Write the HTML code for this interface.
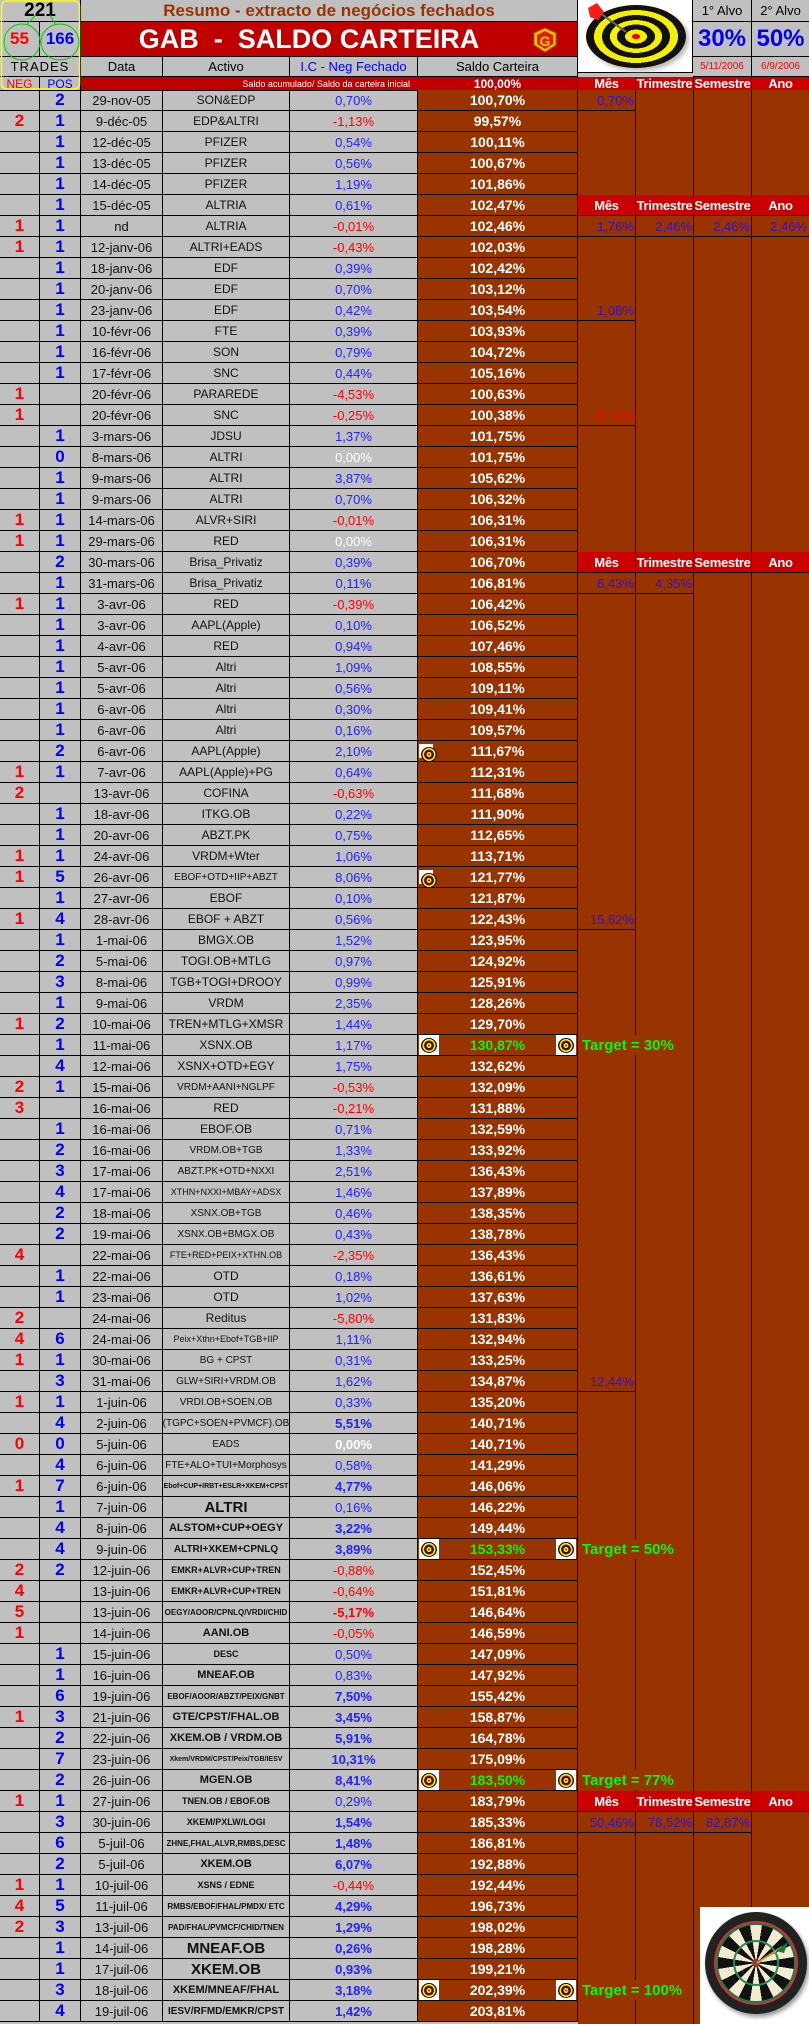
<!DOCTYPE html>
<html><head><meta charset="utf-8">
<style>
*{margin:0;padding:0;box-sizing:border-box}
body{width:809px;height:2024px;background:#c0c0c0;font-family:"Liberation Sans",Arial,sans-serif;position:relative;overflow:hidden}
.abs{position:absolute}
.r{display:flex;height:21px;border-bottom:1px solid #000;width:578px}
.r>div{border-right:1px solid #000;display:flex;align-items:center;justify-content:center;white-space:nowrap;overflow:hidden;height:20px}
.r>div:nth-child(1){width:40px;color:#f00;font-weight:bold;font-size:17px}
.r>div:nth-child(2){width:41px;color:#00f;font-weight:bold;font-size:17px}
.r>div:nth-child(3){width:82px;font-size:13px;color:#111}
.r>div:nth-child(4){width:127px;font-size:12px;color:#111}
.r>div:nth-child(5){width:128px;font-size:13px;color:#22f}
.r>div:nth-child(6){width:160px;background:#993300;color:#fff;font-weight:bold;font-size:14px;position:relative}
.r>div.ng{color:#f00!important}
.r>div.w{color:#fff!important}
.bo{font-weight:bold}
.s1{font-size:10px!important}
.s2{font-size:9px!important;font-weight:bold}
.s3{font-size:7px!important;font-weight:bold}
.s4{font-size:11px!important;font-weight:bold}
.s5{font-size:15px!important;font-weight:bold}
.g{color:#0f0!important}
.ic{position:absolute;top:0;width:20px;height:20px;background:#fff}
.ic::after{content:"";position:absolute;left:2px;top:3px;width:16px;height:15px;border-radius:50%;background:repeating-radial-gradient(circle,#c00 0 1px,#ee0 1px 2.5px,#111 2.5px 4px)}
.hd{position:absolute;display:flex;align-items:center;justify-content:center;white-space:nowrap}
.rh{position:absolute;left:0;width:231px;height:21px;background:#cc0000;border-bottom:1px solid #000;display:flex}
.rh div{height:20px;display:flex;align-items:center;justify-content:center;color:#fff;font-weight:bold;font-size:13px;border-right:1px solid #000;letter-spacing:-0.3px}
.rv{position:absolute;height:21px;display:flex;align-items:center;justify-content:flex-end;padding-right:2px;color:#3311cc;font-size:13px}
.bl{border-bottom:1px solid #000}
.vl{position:absolute;width:1px;background:#000;top:0;bottom:0}
.tg{position:absolute;left:2px;height:20px;padding:0 2px;background:#993300;color:#0f0;font-weight:bold;font-size:15px;display:flex;align-items:center;white-space:nowrap}
</style></head><body>

<div class="abs" style="left:0;top:0;width:809px;height:90px;background:#c0c0c0"></div>
<div class="hd" style="left:0;top:0;width:81px;height:22px;font-size:19px;font-weight:bold;border-right:1px solid #000;border-bottom:1px solid #000">221</div>
<div class="hd" style="left:81px;top:0;width:497px;height:22px;font-size:17px;font-weight:bold;color:#993300;border-right:1px solid #000;border-bottom:1px solid #000">Resumo - extracto de negócios fechados</div>
<div class="hd" style="left:0;top:22px;width:40px;height:35px;font-size:17px;font-weight:bold;color:#f00;border-right:1px solid #000;border-bottom:1px solid #000">55</div>
<div class="hd" style="left:40px;top:22px;width:41px;height:35px;font-size:17px;font-weight:bold;color:#00f;border-right:1px solid #000;border-bottom:1px solid #000">166</div>
<div class="hd" style="left:81px;top:22px;width:497px;height:35px;background:#c00000;color:#fff;font-size:27px;font-weight:bold;border-right:1px solid #000;border-bottom:1px solid #000;padding-right:40px">GAB&nbsp; -&nbsp; SALDO CARTEIRA</div>
<svg class="abs" style="left:532px;top:27px" width="26" height="26" viewBox="0 0 26 26"><path d="M13 1 L24 6 L24 18 L13 25 L2 18 L2 6 Z" fill="#f5c000" stroke="#a06000"/><path d="M13 4 L21 8 L21 17 L13 22 L5 17 L5 8 Z" fill="#e02000"/><text x="13" y="19" font-family="Liberation Sans" font-weight="bold" font-size="14" fill="#ffd000" text-anchor="middle">G</text></svg>
<div class="hd" style="left:0;top:57px;width:81px;height:20px;font-size:13px;letter-spacing:1px;border-right:1px solid #000;border-bottom:1px solid #000">TRADES</div>
<div class="hd" style="left:81px;top:57px;width:82px;height:20px;font-size:13px;border-right:1px solid #000;border-bottom:1px solid #000">Data</div>
<div class="hd" style="left:163px;top:57px;width:127px;height:20px;font-size:13px;border-right:1px solid #000;border-bottom:1px solid #000">Activo</div>
<div class="hd" style="left:290px;top:57px;width:128px;height:20px;font-size:13px;color:#00f;border-right:1px solid #000;border-bottom:1px solid #000">I.C - Neg Fechado</div>
<div class="hd" style="left:418px;top:57px;width:160px;height:20px;font-size:13px;border-right:1px solid #000;border-bottom:1px solid #000">Saldo Carteira</div>
<div class="hd" style="left:0;top:77px;width:40px;height:14px;font-size:12px;color:#f00;border-right:1px solid #000;border-bottom:1px solid #000">NEG</div>
<div class="hd" style="left:40px;top:77px;width:41px;height:14px;font-size:12px;color:#00f;border-right:1px solid #000;border-bottom:1px solid #000">POS</div>
<div class="hd" style="left:81px;top:77px;width:337px;height:14px;background:#c00000;color:#fff;font-size:9px;justify-content:flex-end;padding-right:8px;border-bottom:1px solid #000">Saldo acumulado/ Saldo da carteira inicial</div>
<div class="hd" style="left:418px;top:77px;width:160px;height:14px;background:#c00000;color:#fff;font-size:12px;font-weight:bold;border-right:1px solid #000;border-bottom:1px solid #000">100,00%</div>
<div class="rh" style="left:578px;top:77px;height:14px"><div style="width:58px;height:13px">Mês</div><div style="width:58px;height:13px">Trimestre</div><div style="width:58px;height:13px">Semestre</div><div style="width:57px;height:13px;border-right:0">Ano</div></div>
<div class="abs" style="left:578px;top:0;width:115px;height:73px;background:#fff;border-right:1px solid #000;border-bottom:1px solid #000"></div>
<div class="abs" style="left:586px;top:5px;width:100px;height:63px;border-radius:50%;background:#ff0;box-shadow:3px 3px 4px #bbb"></div>
<div class="abs" style="left:586px;top:5px;width:100px;height:63px;border-radius:50%;background:repeating-radial-gradient(ellipse closest-side,#e00 0 8%,#f4f000 8% 22%,#111 22% 38%,#f4f000 38% 52%,#111 52% 68%,#f4f000 68% 84%,#111 84% 100%)"></div>
<svg class="abs" style="left:578px;top:0" width="115" height="72"><line x1="22" y1="13" x2="48" y2="32" stroke="#666" stroke-width="2"/><path d="M10 8 L19 3 L26 12 L20 20 L12 17 Z" fill="#ff1a1a"/></svg>
<div class="hd" style="left:693px;top:0;width:59px;height:22px;font-size:13px;border-right:1px solid #000;border-bottom:1px solid #000">1° Alvo</div>
<div class="hd" style="left:752px;top:0;width:57px;height:22px;font-size:13px;border-bottom:1px solid #000">2° Alvo</div>
<div class="hd" style="left:693px;top:22px;width:59px;height:35px;font-size:24px;font-weight:bold;color:#00f;border-right:1px solid #000;border-bottom:1px solid #000">30%</div>
<div class="hd" style="left:752px;top:22px;width:57px;height:35px;font-size:24px;font-weight:bold;color:#00f;border-bottom:1px solid #000">50%</div>
<div class="hd" style="left:693px;top:57px;width:59px;height:20px;font-size:10px;color:#f00;border-right:1px solid #000;border-bottom:1px solid #000">5/11/2006</div>
<div class="hd" style="left:752px;top:57px;width:57px;height:20px;font-size:10px;color:#f00;border-bottom:1px solid #000">6/9/2006</div>
<svg class="abs" style="left:0;top:0" width="82" height="90"><rect x="1.5" y="1" width="78" height="88" rx="5" fill="none" stroke="#ff0" stroke-width="1.5"/><ellipse cx="22" cy="42" rx="18" ry="18" fill="none" stroke="#0c0"/><ellipse cx="60" cy="42" rx="19" ry="18" fill="none" stroke="#0c0"/><line x1="27" y1="24" x2="36" y2="15" stroke="#0c0"/><line x1="55" y1="24" x2="50" y2="15" stroke="#0c0"/></svg>

<div class="abs" style="left:0;top:90px">
<div class="r"><div></div><div>2</div><div>29-nov-05</div><div>SON&amp;EDP</div><div>0,70%</div><div>100,70%</div></div>
<div class="r"><div>2</div><div>1</div><div>9-déc-05</div><div>EDP&amp;ALTRI</div><div class="ng">-1,13%</div><div>99,57%</div></div>
<div class="r"><div></div><div>1</div><div>12-déc-05</div><div>PFIZER</div><div>0,54%</div><div>100,11%</div></div>
<div class="r"><div></div><div>1</div><div>13-déc-05</div><div>PFIZER</div><div>0,56%</div><div>100,67%</div></div>
<div class="r"><div></div><div>1</div><div>14-déc-05</div><div>PFIZER</div><div>1,19%</div><div>101,86%</div></div>
<div class="r"><div></div><div>1</div><div>15-déc-05</div><div>ALTRIA</div><div>0,61%</div><div>102,47%</div></div>
<div class="r"><div>1</div><div>1</div><div>nd</div><div>ALTRIA</div><div class="ng">-0,01%</div><div>102,46%</div></div>
<div class="r"><div>1</div><div>1</div><div>12-janv-06</div><div>ALTRI+EADS</div><div class="ng">-0,43%</div><div>102,03%</div></div>
<div class="r"><div></div><div>1</div><div>18-janv-06</div><div>EDF</div><div>0,39%</div><div>102,42%</div></div>
<div class="r"><div></div><div>1</div><div>20-janv-06</div><div>EDF</div><div>0,70%</div><div>103,12%</div></div>
<div class="r"><div></div><div>1</div><div>23-janv-06</div><div>EDF</div><div>0,42%</div><div>103,54%</div></div>
<div class="r"><div></div><div>1</div><div>10-févr-06</div><div>FTE</div><div>0,39%</div><div>103,93%</div></div>
<div class="r"><div></div><div>1</div><div>16-févr-06</div><div>SON</div><div>0,79%</div><div>104,72%</div></div>
<div class="r"><div></div><div>1</div><div>17-févr-06</div><div>SNC</div><div>0,44%</div><div>105,16%</div></div>
<div class="r"><div>1</div><div></div><div>20-févr-06</div><div>PARAREDE</div><div class="ng">-4,53%</div><div>100,63%</div></div>
<div class="r"><div>1</div><div></div><div>20-févr-06</div><div>SNC</div><div class="ng">-0,25%</div><div>100,38%</div></div>
<div class="r"><div></div><div>1</div><div>3-mars-06</div><div>JDSU</div><div>1,37%</div><div>101,75%</div></div>
<div class="r"><div></div><div>0</div><div>8-mars-06</div><div>ALTRI</div><div class="w">0,00%</div><div>101,75%</div></div>
<div class="r"><div></div><div>1</div><div>9-mars-06</div><div>ALTRI</div><div>3,87%</div><div>105,62%</div></div>
<div class="r"><div></div><div>1</div><div>9-mars-06</div><div>ALTRI</div><div>0,70%</div><div>106,32%</div></div>
<div class="r"><div>1</div><div>1</div><div>14-mars-06</div><div>ALVR+SIRI</div><div class="ng">-0,01%</div><div>106,31%</div></div>
<div class="r"><div>1</div><div>1</div><div>29-mars-06</div><div>RED</div><div class="w">0,00%</div><div>106,31%</div></div>
<div class="r"><div></div><div>2</div><div>30-mars-06</div><div>Brisa_Privatiz</div><div>0,39%</div><div>106,70%</div></div>
<div class="r"><div></div><div>1</div><div>31-mars-06</div><div>Brisa_Privatiz</div><div>0,11%</div><div>106,81%</div></div>
<div class="r"><div>1</div><div>1</div><div>3-avr-06</div><div>RED</div><div class="ng">-0,39%</div><div>106,42%</div></div>
<div class="r"><div></div><div>1</div><div>3-avr-06</div><div>AAPL(Apple)</div><div>0,10%</div><div>106,52%</div></div>
<div class="r"><div></div><div>1</div><div>4-avr-06</div><div>RED</div><div>0,94%</div><div>107,46%</div></div>
<div class="r"><div></div><div>1</div><div>5-avr-06</div><div>Altri</div><div>1,09%</div><div>108,55%</div></div>
<div class="r"><div></div><div>1</div><div>5-avr-06</div><div>Altri</div><div>0,56%</div><div>109,11%</div></div>
<div class="r"><div></div><div>1</div><div>6-avr-06</div><div>Altri</div><div>0,30%</div><div>109,41%</div></div>
<div class="r"><div></div><div>1</div><div>6-avr-06</div><div>Altri</div><div>0,16%</div><div>109,57%</div></div>
<div class="r"><div></div><div>2</div><div>6-avr-06</div><div>AAPL(Apple)</div><div>2,10%</div><div><span class="ic" style="left:1px;width:14px;height:14px;top:3px"></span>111,67%</div></div>
<div class="r"><div>1</div><div>1</div><div>7-avr-06</div><div>AAPL(Apple)+PG</div><div>0,64%</div><div>112,31%</div></div>
<div class="r"><div>2</div><div></div><div>13-avr-06</div><div>COFINA</div><div class="ng">-0,63%</div><div>111,68%</div></div>
<div class="r"><div></div><div>1</div><div>18-avr-06</div><div>ITKG.OB</div><div>0,22%</div><div>111,90%</div></div>
<div class="r"><div></div><div>1</div><div>20-avr-06</div><div>ABZT.PK</div><div>0,75%</div><div>112,65%</div></div>
<div class="r"><div>1</div><div>1</div><div>24-avr-06</div><div>VRDM+Wter</div><div>1,06%</div><div>113,71%</div></div>
<div class="r"><div>1</div><div>5</div><div>26-avr-06</div><div class="s1">EBOF+OTD+IIP+ABZT</div><div>8,06%</div><div><span class="ic" style="left:1px;width:14px;height:14px;top:3px"></span>121,77%</div></div>
<div class="r"><div></div><div>1</div><div>27-avr-06</div><div>EBOF</div><div>0,10%</div><div>121,87%</div></div>
<div class="r"><div>1</div><div>4</div><div>28-avr-06</div><div>EBOF + ABZT</div><div>0,56%</div><div>122,43%</div></div>
<div class="r"><div></div><div>1</div><div>1-mai-06</div><div>BMGX.OB</div><div>1,52%</div><div>123,95%</div></div>
<div class="r"><div></div><div>2</div><div>5-mai-06</div><div>TOGI.OB+MTLG</div><div>0,97%</div><div>124,92%</div></div>
<div class="r"><div></div><div>3</div><div>8-mai-06</div><div>TGB+TOGI+DROOY</div><div>0,99%</div><div>125,91%</div></div>
<div class="r"><div></div><div>1</div><div>9-mai-06</div><div>VRDM</div><div>2,35%</div><div>128,26%</div></div>
<div class="r"><div>1</div><div>2</div><div>10-mai-06</div><div>TREN+MTLG+XMSR</div><div>1,44%</div><div>129,70%</div></div>
<div class="r"><div></div><div>1</div><div>11-mai-06</div><div>XSNX.OB</div><div>1,17%</div><div class="g"><span class="ic" style="left:1px"></span>130,87%<span class="ic" style="left:138px"></span></div></div>
<div class="r"><div></div><div>4</div><div>12-mai-06</div><div>XSNX+OTD+EGY</div><div>1,75%</div><div>132,62%</div></div>
<div class="r"><div>2</div><div>1</div><div>15-mai-06</div><div class="s1">VRDM+AANI+NGLPF</div><div class="ng">-0,53%</div><div>132,09%</div></div>
<div class="r"><div>3</div><div></div><div>16-mai-06</div><div>RED</div><div class="ng">-0,21%</div><div>131,88%</div></div>
<div class="r"><div></div><div>1</div><div>16-mai-06</div><div>EBOF.OB</div><div>0,71%</div><div>132,59%</div></div>
<div class="r"><div></div><div>2</div><div>16-mai-06</div><div class="s1">VRDM.OB+TGB</div><div>1,33%</div><div>133,92%</div></div>
<div class="r"><div></div><div>3</div><div>17-mai-06</div><div class="s1">ABZT.PK+OTD+NXXI</div><div>2,51%</div><div>136,43%</div></div>
<div class="r"><div></div><div>4</div><div>17-mai-06</div><div class="s2" style="font-weight:normal">XTHN+NXXI+MBAY+ADSX</div><div>1,46%</div><div>137,89%</div></div>
<div class="r"><div></div><div>2</div><div>18-mai-06</div><div class="s1">XSNX.OB+TGB</div><div>0,46%</div><div>138,35%</div></div>
<div class="r"><div></div><div>2</div><div>19-mai-06</div><div class="s1">XSNX.OB+BMGX.OB</div><div>0,43%</div><div>138,78%</div></div>
<div class="r"><div>4</div><div></div><div>22-mai-06</div><div class="s2" style="font-weight:normal">FTE+RED+PEIX+XTHN.OB</div><div class="ng">-2,35%</div><div>136,43%</div></div>
<div class="r"><div></div><div>1</div><div>22-mai-06</div><div>OTD</div><div>0,18%</div><div>136,61%</div></div>
<div class="r"><div></div><div>1</div><div>23-mai-06</div><div>OTD</div><div>1,02%</div><div>137,63%</div></div>
<div class="r"><div>2</div><div></div><div>24-mai-06</div><div>Reditus</div><div class="ng">-5,80%</div><div>131,83%</div></div>
<div class="r"><div>4</div><div>6</div><div>24-mai-06</div><div class="s2" style="font-weight:normal">Peix+Xthn+Ebof+TGB+IIP</div><div>1,11%</div><div>132,94%</div></div>
<div class="r"><div>1</div><div>1</div><div>30-mai-06</div><div class="s1">BG + CPST</div><div>0,31%</div><div>133,25%</div></div>
<div class="r"><div></div><div>3</div><div>31-mai-06</div><div class="s1">GLW+SIRI+VRDM.OB</div><div>1,62%</div><div>134,87%</div></div>
<div class="r"><div>1</div><div>1</div><div>1-juin-06</div><div class="s1">VRDI.OB+SOEN.OB</div><div>0,33%</div><div>135,20%</div></div>
<div class="r"><div></div><div>4</div><div>2-juin-06</div><div style="font-size:10px">(TGPC+SOEN+PVMCF).OB</div><div class="bo">5,51%</div><div>140,71%</div></div>
<div class="r"><div>0</div><div>0</div><div>5-juin-06</div><div class="s1">EADS</div><div class="w bo">0,00%</div><div>140,71%</div></div>
<div class="r"><div></div><div>4</div><div>6-juin-06</div><div style="font-size:10px">FTE+ALO+TUI+Morphosys</div><div>0,58%</div><div>141,29%</div></div>
<div class="r"><div>1</div><div>7</div><div>6-juin-06</div><div class="s3">Ebof+CUP+IRBT+ESLR+XKEM+CPST</div><div class="bo">4,77%</div><div>146,06%</div></div>
<div class="r"><div></div><div>1</div><div>7-juin-06</div><div class="s5">ALTRI</div><div>0,16%</div><div>146,22%</div></div>
<div class="r"><div></div><div>4</div><div>8-juin-06</div><div class="s4">ALSTOM+CUP+OEGY</div><div class="bo">3,22%</div><div>149,44%</div></div>
<div class="r"><div></div><div>4</div><div>9-juin-06</div><div class="s4" style="font-size:10px!important">ALTRI+XKEM+CPNLQ</div><div class="bo">3,89%</div><div class="g"><span class="ic" style="left:1px"></span>153,33%<span class="ic" style="left:138px"></span></div></div>
<div class="r"><div>2</div><div>2</div><div>12-juin-06</div><div class="s2">EMKR+ALVR+CUP+TREN</div><div class="ng">-0,88%</div><div>152,45%</div></div>
<div class="r"><div>4</div><div></div><div>13-juin-06</div><div class="s2">EMKR+ALVR+CUP+TREN</div><div class="ng">-0,64%</div><div>151,81%</div></div>
<div class="r"><div>5</div><div></div><div>13-juin-06</div><div class="s3" style="font-size:8px!important">OEGY/AOOR/CPNLQ/VRDI/CHID</div><div class="ng bo">-5,17%</div><div>146,64%</div></div>
<div class="r"><div>1</div><div></div><div>14-juin-06</div><div class="s4">AANI.OB</div><div class="ng">-0,05%</div><div>146,59%</div></div>
<div class="r"><div></div><div>1</div><div>15-juin-06</div><div class="s2">DESC</div><div>0,50%</div><div>147,09%</div></div>
<div class="r"><div></div><div>1</div><div>16-juin-06</div><div class="s4">MNEAF.OB</div><div>0,83%</div><div>147,92%</div></div>
<div class="r"><div></div><div>6</div><div>19-juin-06</div><div class="s3" style="font-size:8px!important">EBOF/AOOR/ABZT/PEIX/GNBT</div><div class="bo">7,50%</div><div>155,42%</div></div>
<div class="r"><div>1</div><div>3</div><div>21-juin-06</div><div class="s4">GTE/CPST/FHAL.OB</div><div class="bo">3,45%</div><div>158,87%</div></div>
<div class="r"><div></div><div>2</div><div>22-juin-06</div><div class="s4">XKEM.OB / VRDM.OB</div><div class="bo">5,91%</div><div>164,78%</div></div>
<div class="r"><div></div><div>7</div><div>23-juin-06</div><div class="s3">Xkem/VRDM/CPST/Peix/TGB/IESV</div><div class="bo">10,31%</div><div>175,09%</div></div>
<div class="r"><div></div><div>2</div><div>26-juin-06</div><div class="s4">MGEN.OB</div><div class="bo">8,41%</div><div class="g"><span class="ic" style="left:1px"></span>183,50%<span class="ic" style="left:138px"></span></div></div>
<div class="r"><div>1</div><div>1</div><div>27-juin-06</div><div class="s2">TNEN.OB / EBOF.OB</div><div>0,29%</div><div>183,79%</div></div>
<div class="r"><div></div><div>3</div><div>30-juin-06</div><div class="s2">XKEM/PXLW/LOGI</div><div class="bo">1,54%</div><div>185,33%</div></div>
<div class="r"><div></div><div>6</div><div>5-juil-06</div><div class="s3" style="font-size:8px!important">ZHNE,FHAL,ALVR,RMBS,DESC</div><div class="bo">1,48%</div><div>186,81%</div></div>
<div class="r"><div></div><div>2</div><div>5-juil-06</div><div class="s4">XKEM.OB</div><div class="bo">6,07%</div><div>192,88%</div></div>
<div class="r"><div>1</div><div>1</div><div>10-juil-06</div><div class="s2">XSNS / EDNE</div><div class="ng">-0,44%</div><div>192,44%</div></div>
<div class="r"><div>4</div><div>5</div><div>11-juil-06</div><div class="s3" style="font-size:8px!important">RMBS/EBOF/FHAL/PMDX/ ETC</div><div class="bo">4,29%</div><div>196,73%</div></div>
<div class="r"><div>2</div><div>3</div><div>13-juil-06</div><div class="s3" style="font-size:8px!important">PAD/FHAL/PVMCF/CHID/TNEN</div><div class="bo">1,29%</div><div>198,02%</div></div>
<div class="r"><div></div><div>1</div><div>14-juil-06</div><div class="s5">MNEAF.OB</div><div class="bo">0,26%</div><div>198,28%</div></div>
<div class="r"><div></div><div>1</div><div>17-juil-06</div><div class="s5">XKEM.OB</div><div class="bo">0,93%</div><div>199,21%</div></div>
<div class="r"><div></div><div>3</div><div>18-juil-06</div><div class="s4">XKEM/MNEAF/FHAL</div><div class="bo">3,18%</div><div><span class="ic" style="left:1px"></span>202,39%<span class="ic" style="left:138px"></span></div></div>
<div class="r"><div></div><div>4</div><div>19-juil-06</div><div class="s4" style="font-size:10px!important">IESV/RFMD/EMKR/CPST</div><div class="bo">1,42%</div><div>203,81%</div></div>
</div>

<div class="abs" style="left:578px;top:90px;width:231px;height:1934px;background:#993300">
<div class="vl" style="left:57px"></div><div class="vl" style="left:115px"></div><div class="vl" style="left:173px"></div>
<div class="rv bl" style="left:0;top:0;width:58px">0,70%</div>
<div class="rh" style="top:105px"><div style="width:58px">Mês</div><div style="width:58px">Trimestre</div><div style="width:58px">Semestre</div><div style="width:57px;border-right:0">Ano</div></div>
<div class="rv bl" style="left:0;top:126px;width:58px">1,76%</div>
<div class="rv bl" style="left:58px;top:126px;width:58px">2,46%</div>
<div class="rv bl" style="left:116px;top:126px;width:58px">2,46%</div>
<div class="rv bl" style="left:174px;top:126px;width:57px">2,46%</div>
<div class="rv bl" style="left:0;top:210px;width:58px">1,08%</div>
<div class="rv bl" style="left:0;top:315px;width:58px;color:#f00">-3,16%</div>
<div class="rh" style="top:462px"><div style="width:58px">Mês</div><div style="width:58px">Trimestre</div><div style="width:58px">Semestre</div><div style="width:57px;border-right:0">Ano</div></div>
<div class="rv bl" style="left:0;top:483px;width:58px">6,43%</div>
<div class="rv bl" style="left:58px;top:483px;width:58px">4,35%</div>
<div class="rv bl" style="left:0;top:819px;width:58px">15,62%</div>
<div class="tg" style="top:945px">Target = 30%</div>
<div class="rv bl" style="left:0;top:1281px;width:58px">12,44%</div>
<div class="tg" style="top:1449px">Target = 50%</div>
<div class="tg" style="top:1680px">Target = 77%</div>
<div class="rh" style="top:1701px"><div style="width:58px">Mês</div><div style="width:58px">Trimestre</div><div style="width:58px">Semestre</div><div style="width:57px;border-right:0">Ano</div></div>
<div class="rv bl" style="left:0;top:1722px;width:58px">50,46%</div>
<div class="rv bl" style="left:58px;top:1722px;width:58px">78,52%</div>
<div class="rv bl" style="left:116px;top:1722px;width:58px">82,87%</div>
<div class="tg" style="top:1890px">Target = 100%</div>
</div>

<div class="abs" style="left:700px;top:1907px;width:109px;height:117px;background:#fff"></div>
<div class="abs" style="left:705px;top:1912px;width:102px;height:102px;border-radius:50%;background:#222;box-shadow:2px 3px 4px #999"></div>
<div class="abs" style="left:715px;top:1922px;width:82px;height:82px;border-radius:50%;background:repeating-conic-gradient(from 9deg,#111 0 18deg,#f3ead2 18deg 36deg);border:3px solid #1a7a4a;outline:2px solid #c33;outline-offset:-1px"></div>
<div class="abs" style="left:733px;top:1940px;width:46px;height:46px;border-radius:50%;border:2px solid #2a8a55"></div>
<div class="abs" style="left:752px;top:1959px;width:8px;height:8px;border-radius:50%;background:#1a7a4a;border:2px solid #c22"></div>
<svg class="abs" style="left:700px;top:1907px" width="109" height="117"><line x1="57" y1="56" x2="82" y2="40" stroke="#c9a040" stroke-width="2"/><path d="M76 44 L88 35 L84 46 Z" fill="#1a7a3a"/></svg>
</body></html>
